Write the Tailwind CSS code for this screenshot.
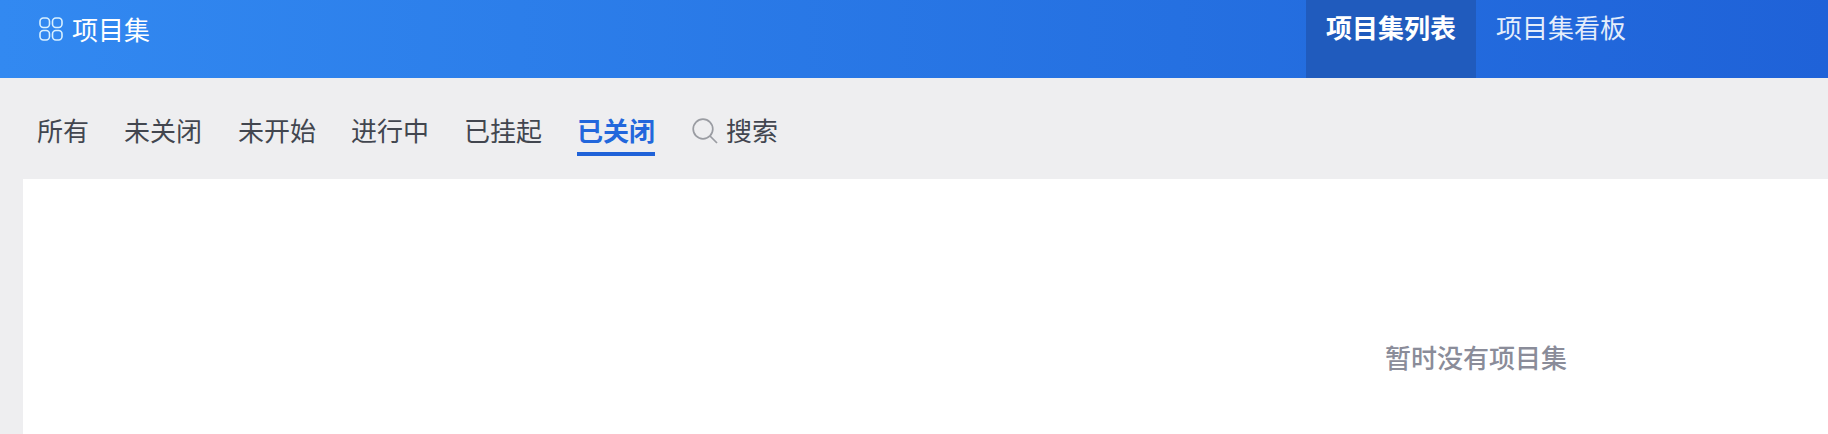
<!DOCTYPE html>
<html lang="zh-CN">
<head>
    <meta charset="UTF-8">
    <title>项目集</title>
    <script src="https://cdn.jsdelivr.net/npm/@tailwindcss/browser@4"></script>
</head>
<body class="h-[434px] overflow-hidden bg-[#eeeef0] font-['Noto_Sans_CJK_SC','Noto_Sans',sans-serif]">
    <!-- Header -->
    <header class="flex h-[78px] justify-between bg-linear-to-r from-[#3289f1] to-[#1f62d8] pl-[39px] pr-[182px] text-white">
        <div class="flex h-[58px] items-center gap-[9px]">
            <svg class="size-[24px]" viewBox="0 0 24 24" fill="none" stroke="#d8f0ff" stroke-width="1.6">
                <rect x="1" y="1" width="9.5" height="9.5" rx="3.4"/>
                <rect x="13.5" y="1" width="9.5" height="9.5" rx="3.4"/>
                <rect x="1" y="13.5" width="9.5" height="9.5" rx="3.4"/>
                <rect x="13.5" y="13.5" width="9.5" height="9.5" rx="3.4"/>
            </svg>
            <span class="text-[26px] leading-none">项目集</span>
        </div>
        <nav class="flex text-[26px] leading-none">
            <a class="h-full bg-[#205bbd] px-[20px] pt-[14px] font-bold">项目集列表</a>
            <a class="h-full px-[20px] pt-[14px] text-[#e4edfb]">项目集看板</a>
        </nav>
    </header>

    <!-- Filter tabs -->
    <nav class="flex h-[101px] items-start gap-[35px] pl-[37px] pt-[33px] text-[26px] leading-[38px] text-[#42464f]">
        <a>所有</a>
        <a>未关闭</a>
        <a class="ml-px">未开始</a>
        <a>进行中</a>
        <a>已挂起</a>
        <a class="h-[45px] border-b-[4px] border-[#1f62d8] font-bold text-[#2267dc]">已关闭</a>
        <a class="ml-[2px] flex items-center gap-[8px]">
            <svg class="mt-[2px] size-[26px]" viewBox="0 0 26 26" fill="none" stroke="#9a9ca2" stroke-width="1.7">
                <circle cx="11" cy="11" r="9.8"/>
                <path d="M18 18 25 25"/>
            </svg>
            <span>搜索</span>
        </a>
    </nav>

    <!-- Empty state -->
    <main class="ml-[23px] h-[255px] bg-white pl-[1362px] pt-[159px] text-[26px] font-medium leading-[38px] text-[#8a8c99]">
        暂时没有项目集
    </main>
</body>
</html>
